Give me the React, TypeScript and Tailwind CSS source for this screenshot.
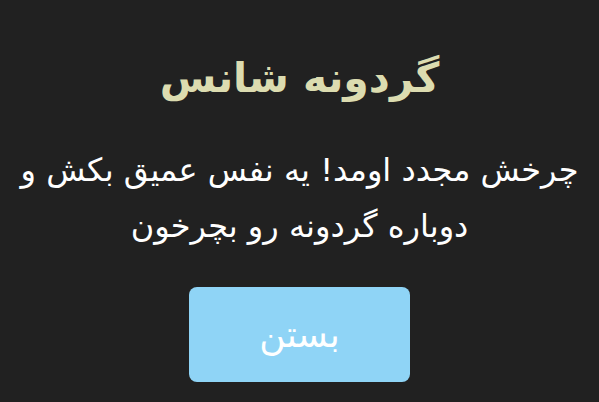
import React from "react";

export default function App() {
  return (
    <div
      dir="rtl"
      className="w-[599px] h-[402px] bg-[#212121] flex flex-col items-center overflow-hidden"
      style={{ fontFamily: '"DejaVu Sans", "Noto Sans", sans-serif' }}
    >
      <h1 className="mt-[50px] text-[41px] leading-[56px] font-bold text-[#dcdcb0]">گردونه شانس</h1>
      <p className="mt-[36px] text-[32px] leading-[56px] text-white text-center whitespace-nowrap">
        چرخش مجدد اومد! یه نفس عمیق بکش و
        <br />
        دوباره گردونه رو بچرخون
      </p>
      <button className="mt-[33px] w-[221px] h-[95px] rounded-[8px] bg-[#8fd4f6] text-white text-[36px]">
        بستن
      </button>
    </div>
  );
}
